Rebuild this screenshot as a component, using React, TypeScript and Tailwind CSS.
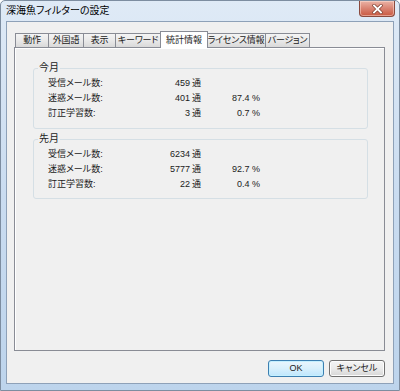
const tabs = [
  { label: "動作", w: "w-[34px]" },
  { label: "外国語", w: "w-[36px]" },
  { label: "表示", w: "w-[33px]" },
  { label: "キーワード", w: "w-[46px]" },
  { label: "統計情報", w: "w-[48px]", active: true },
  { label: "ライセンス情報", w: "w-[60px]" },
  { label: "バージョン", w: "w-[45px]" },
];

const groups = [
  {
    title: "今月",
    h: "h-[61px]",
    rows: [
      { label: "受信メール数:", count: "459", pct: "" },
      { label: "迷惑メール数:", count: "401", pct: "87.4 %" },
      { label: "訂正学習数:", count: "3", pct: "0.7 %" },
    ],
  },
  {
    title: "先月",
    h: "h-[60px]",
    rows: [
      { label: "受信メール数:", count: "6234", pct: "" },
      { label: "迷惑メール数:", count: "5777", pct: "92.7 %" },
      { label: "訂正学習数:", count: "22", pct: "0.4 %" },
    ],
  },
];

function CloseButton() {
  return (
    <div className="mr-[4px] w-[36px] h-[16px] rounded-b-[4px] border border-t-0 border-[#8a4a3e] bg-gradient-to-b from-[#eab3a6] via-[#d98372] to-[#c85840] flex items-center justify-center shadow-[inset_0_0_0_1px_rgba(255,225,215,0.5)]">
      <svg width="11" height="10" viewBox="0 0 11 10">
        <path d="M2 1.5 L9 8.5 M9 1.5 L2 8.5" stroke="#7a3a2c" strokeWidth="3.2" strokeLinecap="square" />
        <path d="M2 1.5 L9 8.5 M9 1.5 L2 8.5" stroke="#ffffff" strokeWidth="1.9" strokeLinecap="square" />
      </svg>
    </div>
  );
}

export default function App() {
  return (
    <div className="w-[400px] h-[391px] flex flex-col border border-[#7d8da0] rounded-t-[5px] overflow-hidden bg-gradient-to-b from-[#dfeaf6] via-[#cadcf0] to-[#bdd4ec] text-[#1b1b1b] font-['Liberation_Sans','Noto_Sans_CJK_JP',sans-serif] [font-feature-settings:'palt']">
      {/* title bar */}
      <div className="h-[20px] flex items-start justify-between">
        <span className="pl-[5px] pt-[4px] text-[10px] leading-[12px] text-black">深海魚フィルターの設定</span>
        <CloseButton />
      </div>

      {/* client area */}
      <div className="flex-1 mx-[5px] mb-[6px] border border-[#8ea1b8] bg-[#f0f0f0] flex flex-col text-[9px]">
        {/* tab strip */}
        <div className="pt-[9px] pl-[8px] flex items-end h-[25px] whitespace-nowrap">
          {tabs.map((t) =>
            t.active ? (
              <div
                key={t.label}
                className={`${t.w} -mx-[1px] h-[17px] -mb-px relative z-10 border border-b-0 border-[#898c95] bg-white flex items-center justify-center leading-none`}
              >
                {t.label}
              </div>
            ) : (
              <div
                key={t.label}
                className={`${t.w} h-[14px] -ml-px first:ml-0 border border-b-0 border-[#898c95] bg-gradient-to-b from-[#f4f4f4] via-[#e9e9e9] to-[#d9d9d9] flex items-center justify-center leading-none tracking-[-0.2px]`}
              >
                {t.label}
              </div>
            )
          )}
        </div>

        {/* tab page */}
        <div className="ml-[7px] w-[371px] h-[304px] border border-[#898c95] bg-[#f0f0f0] shadow-[inset_1px_1px_0_#ffffff]">
          <div className="pt-[20px] pl-[18px] flex flex-col gap-[10px]">
            {groups.map((g) => (
              <div
                key={g.title}
                className={`relative w-[335px] ${g.h} border border-[#d5dfe5] rounded-[3px] pt-[7px] pl-[14px]`}
              >
                <span className="absolute left-[4px] -top-[7px] px-[1px] bg-[#f0f0f0] text-[10px] leading-[12px]">
                  {g.title}
                </span>
                {g.rows.map((r) => (
                  <div key={r.label} className="h-[15px] flex items-center leading-none">
                    <div className="w-[142px] flex justify-between">
                      <span>{r.label}</span>
                      <span>{r.count}</span>
                    </div>
                    <span className="ml-[2px] w-[9px]">通</span>
                    <span className="w-[59px] text-right">{r.pct}</span>
                  </div>
                ))}
              </div>
            ))}
          </div>
        </div>

        {/* buttons */}
        <div className="mt-[9px] pr-[8px] flex justify-end gap-[5px]">
          <button className="w-[56px] h-[17px] rounded-[3px] border border-[#3c7fb1] bg-gradient-to-b from-[#eaf6fd] via-[#d9f0fc] to-[#bee6fd] shadow-[inset_0_0_0_1px_#c5f0ff] text-[9px] leading-none">
            OK
          </button>
          <button className="w-[56px] h-[17px] rounded-[3px] border border-[#707070] bg-gradient-to-b from-[#f4f4f4] via-[#ebebeb] to-[#d6d6d6] shadow-[inset_0_0_0_1px_#fcfcfc] text-[9px] leading-none">
            キャンセル
          </button>
        </div>
      </div>
    </div>
  );
}
